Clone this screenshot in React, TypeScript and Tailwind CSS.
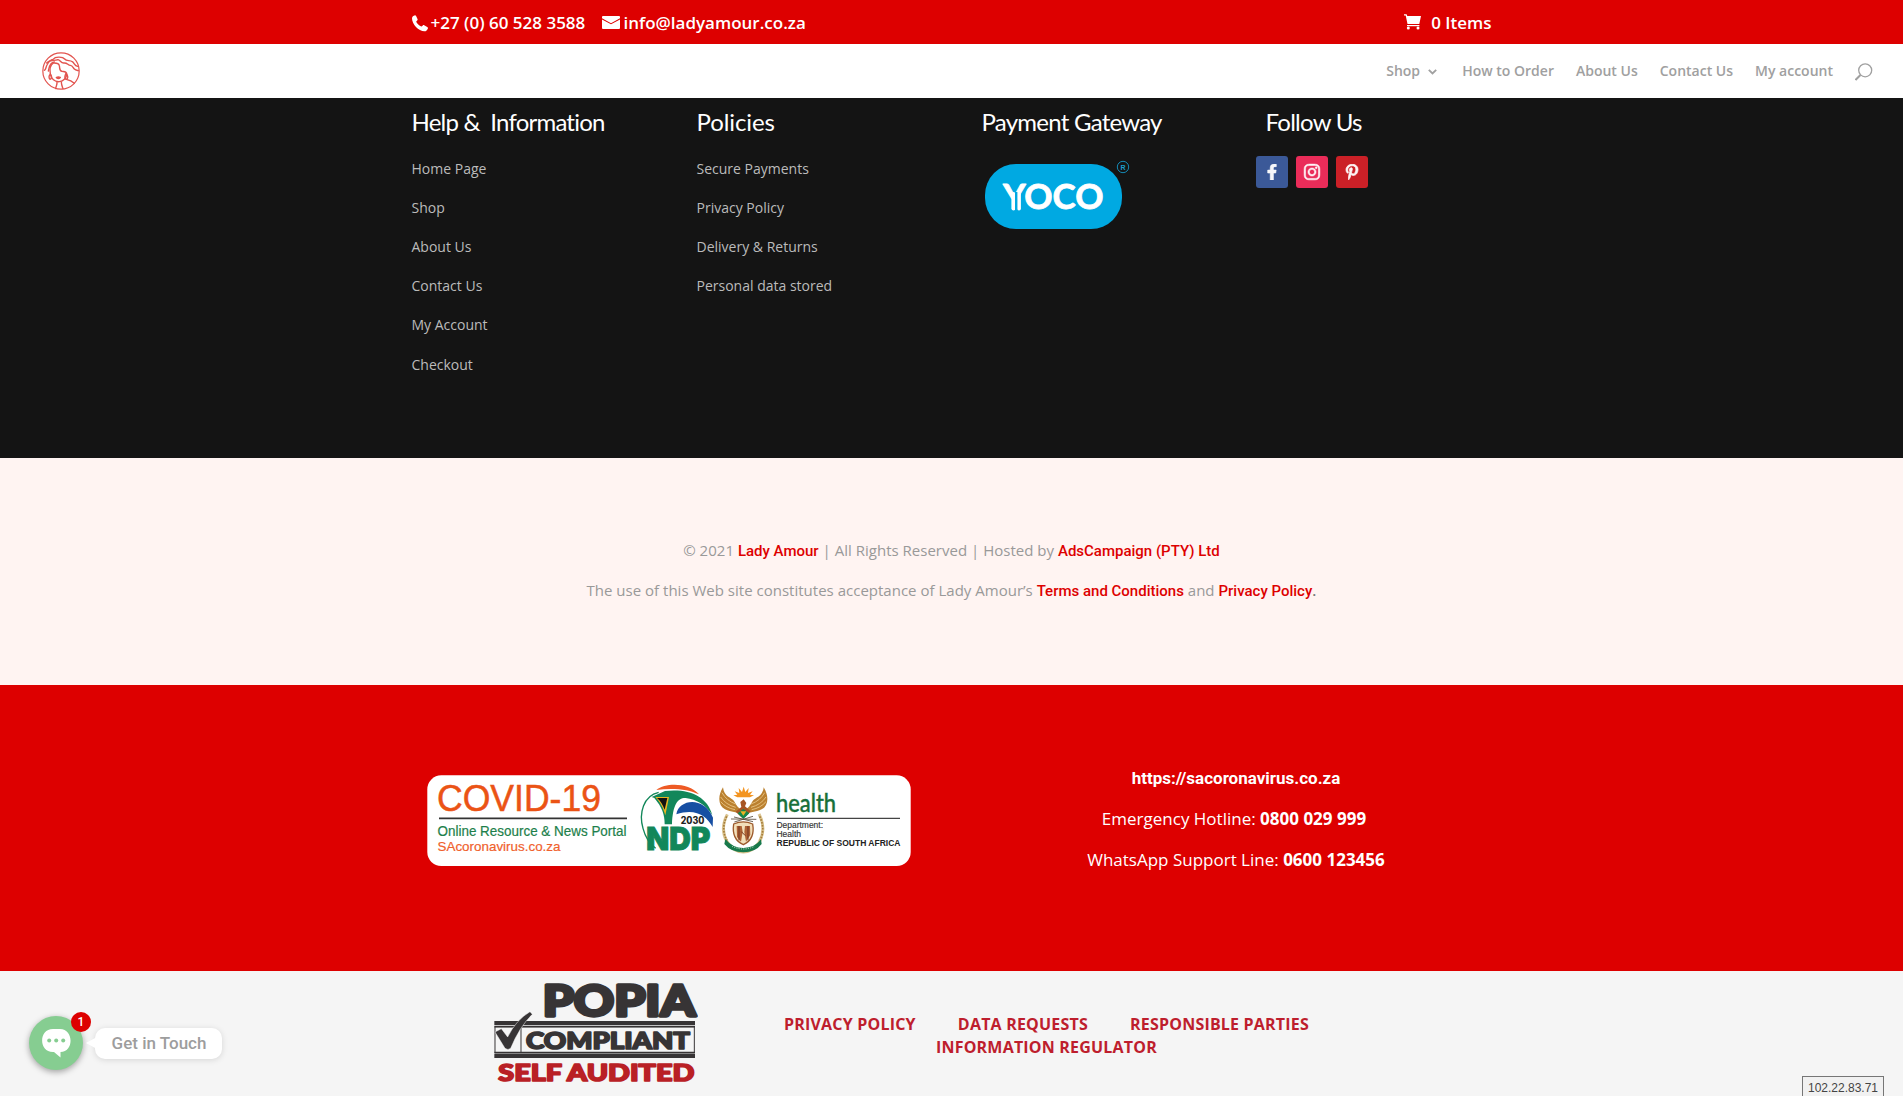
import React from "react";
import { FaFacebookF, FaInstagram, FaPinterestP } from "react-icons/fa";

const openSans = "font-['Open_Sans',sans-serif]";

function BrandLogo() {
  return (
    <svg className="block h-[40px] w-[40px]" viewBox="123 153 120 120" fill="none" stroke="#e2544f" strokeWidth="4.2" strokeLinecap="round" strokeLinejoin="round">
      <circle cx="183" cy="213" r="54.5" strokeWidth="3.6" />
      <path d="M133 211c5-2 4-9 8-16 4-8 8-16 18-17 8-10 30-7 35-1 6 8 16 2 23 8 7 5 6 12 16 14" />
      <path d="M140 189c10-12 22-5 34-10 9 2 8 11 18 10 10-1 12 7 19 7 7 0 8 7 12 11 4 4 7 4 12 5" />
      <path d="M145 213c3-10 2-24 18-27" />
      <path d="M151 222c-3-15 1-27 9-33 8 0 16-1 18 8 2 8-1 15 8 17 9 1 14 0 14 8 0 11-9 22-22 23-14 1-24-9-27-23z" />
      <path d="M169 233c4-3 8-2 12-1-2 4-9 5-12 1z" fill="#d93832" />
      <path d="M151 223c-5 3-5 11-1 15 5-2 6-8 3-13M198 220c-3 6-4 14-1 17 4 2 7-2 6-8-1-5-2-8-5-9z" />
      <path d="M171 246c1 8-3 12-4 20M184 246c0 8 3 14 5 20M199 238c11 2 19 7 24 12" />
    </svg>
  );
}

function PhoneIcon() {
  return (
    <svg className="h-[17px] w-[16px]" viewBox="0 0 16 17" fill="#fff">
      <path d="M0 3.2C0 1.6 1.6.6 2.6.4c.7-.2 1.2.1 1.5.7L5.5 4c.3.7.1 1.1-.3 1.5l-1 1c.5 1.800 3.400 4.600 5.400 5.100l1.200-1.200c.4-.4.9-.5 1.400-.2l3 1.700c.7.4.9.9.7 1.500-.5 1.500-1.800 2.900-3.400 2.900C6.500 16.100 0 9 0 3.200Z" />
    </svg>
  );
}

function MailIcon() {
  return (
    <svg className="mb-[2px] h-[13px] w-[18px]" viewBox="0 0 18 13" fill="#fff">
      <path d="M1 0h16q1 0 1 1v1.300L9 7.200 0 2.300V1q0-1 1-1Z" />
      <path d="M0 3.500l9 4.800 9-4.800V12q0 1-1 1H1q-1 0-1-1Z" />
    </svg>
  );
}

function CartIcon() {
  return (
    <svg className="mb-[3px] h-[16px] w-[17px]" viewBox="0 0 17 16" fill="#fff">
      <path d="M0 .2h2.600l.7 1.700H17l-1.700 8H3.500L1.700 1.400H0Z" />
      <path d="M3 11h12.400v1.200H3z" />
      <circle cx="4.300" cy="14" r="1.500" />
      <circle cx="14" cy="14" r="1.500" />
    </svg>
  );
}

function YocoLogo() {
  return (
    <svg className="mt-[23px] ml-[3px] block h-[70px] w-[146px]" viewBox="985 160 146 70">
      <rect x="985" y="164" width="137" height="65" rx="31" fill="#00a9e2" />
      <text x="1003" y="208.500" textLength="100.5" lengthAdjust="spacingAndGlyphs" fill="#fff" stroke="#fff" strokeWidth=".8" strokeLinejoin="round" fontFamily="Lato" fontWeight="700" fontSize="34">YOCO</text>
      <path d="M1013.500 194v14.500" stroke="#fff" strokeWidth="3.800" strokeLinecap="round" />
      <path d="M1019 194v14.500" stroke="#fff" strokeWidth="3.800" strokeLinecap="round" />
      <path d="M1016.200 192v18.500" stroke="#00a9e2" strokeWidth="2.400" />
      <circle cx="1123" cy="167" r="5.700" fill="none" stroke="#1489b5" strokeWidth="1" />
      <text x="1123" y="169.500" textAnchor="middle" fill="#1c9ccb" fontFamily="Liberation Sans" fontWeight="700" fontSize="7">R</text>
    </svg>
  );
}

function CovidBanner() {
  return (
    <svg className="block h-[91px] w-[484px]" viewBox="427 775 484 91">
      <rect x="427.300" y="775.300" width="483.400" height="90.700" rx="14" fill="#fff" />
      <g fontFamily="Liberation Sans">
        <text x="437" y="811" fontSize="37" textLength="164" lengthAdjust="spacingAndGlyphs" fill="#eb5315" stroke="#eb5315" strokeWidth=".5">COVID-19</text>
        <path d="M439 818.300h188" stroke="#333" strokeWidth="1.800" />
        <text x="437.500" y="836.300" fontSize="14.400" textLength="189" lengthAdjust="spacingAndGlyphs" fill="#1d7f4b" stroke="#1d7f4b" strokeWidth=".2">Online Resource &amp; News Portal</text>
        <text x="437.500" y="851" fontSize="13.600" textLength="123" lengthAdjust="spacingAndGlyphs" fill="#f0612c" stroke="#f0612c" strokeWidth=".2">SAcoronavirus.co.za</text>
        <path d="M777 818.300h123" stroke="#444" strokeWidth="1.300" />
        <text x="776.500" y="828" fontSize="8.600" textLength="46.500" lengthAdjust="spacingAndGlyphs" fill="#333" stroke="#333" strokeWidth=".15">Department:</text>
        <text x="776.500" y="837" fontSize="8.600" textLength="24.500" lengthAdjust="spacingAndGlyphs" fill="#333" stroke="#333" strokeWidth=".15">Health</text>
        <text x="776.500" y="846.300" fontSize="8.600" fontWeight="700" textLength="124" lengthAdjust="spacingAndGlyphs" fill="#222">REPUBLIC OF SOUTH AFRICA</text>
      </g>
      <text x="776" y="812.300" fontFamily="Lato" fontWeight="500" fontSize="24.500" textLength="60" lengthAdjust="spacingAndGlyphs" fill="#17703a" stroke="#17703a" strokeWidth=".4">health</text>
      <g transform="translate(625 765) scale(.33333)">
        {/* NDP 2030 emblem */}
        <path d="M94 75C122 53 190 52 222 88 190 72 140 68 94 75Z" fill="#ee5a24" />
        <path d="M101 82C55 92 41 145 54 190 62 220 78 240 92 250" fill="none" stroke="#12875a" strokeWidth="4" />
        <path d="M80 96 120 78C190 70 246 92 262 150 240 118 215 103 182 99 158 98 143 120 141 178H119C119 147 111 127 88 99Z" fill="#12875a" />
        <path d="M91 96h41l-11 55C114 126 106 113 91 96Z" fill="#e9b323" />
        <path d="M96 99h31l-8 35C113 119 108 109 96 99Z" fill="#111" />
        <path d="M154 148C161 103 236 92 264 158l-1 28C245 152 210 128 154 148Z" fill="#164fa3" />
        <text x="167" y="176" fontFamily="Inter" fontWeight="800" fontSize="29" textLength="71" lengthAdjust="spacingAndGlyphs" fill="#222">2030</text>
        <text x="64" y="254" fontFamily="Inter" fontWeight="900" fontSize="94" textLength="192" lengthAdjust="spacingAndGlyphs" fill="#12875a" stroke="#12875a" strokeWidth="3">NDP</text>
        {/* national coat of arms */}
        <path d="M294 67C277 94 280 122 300 133 318 143 338 139 350 151L354 133C338 132 335 120 327 108 320 97 297 97 294 67ZM416 67C433 94 430 122 410 133 392 143 372 139 360 151L356 133C372 132 375 120 383 108 390 97 413 97 416 67Z" fill="#bb8130" />
        <path d="M291 83q13 24 41 34M287 96q15 23 45 31M287 110q16 19 43 24M419 83q-13 24-41 34M423 96q-15 23-45 31M423 110q-16 19-43 24" fill="none" stroke="#e4bf7d" strokeWidth="3" />
        <path d="m325 91 12-2-8-10 14 5-2-15 10 12 5-16 5 16 10-12-2 15 14-5-8 10 12 2-12 6h-38Z" fill="#f39420" />
        <path d="m356 103 8 11-4 10 17 15-17 18h-11l-17-17 17-14-3-15Z" fill="#a75524" />
        <path d="m338 145 17-13 18 13-18 17Z" fill="#15864c" />
        <path d="M346 139h18l-9 13Z" fill="#edb322" />
        <path d="M318 162 394 163M327 156l57 14M328 171l56-17" stroke="#554735" strokeWidth="2.500" />
        <path d="M307 148q-23 43-1 82 20 31 49 31t48-30q22-40-1-84" fill="none" stroke="#d9c28d" strokeWidth="9" />
        <path d="M305 154q-18 38 1 73M404 154q18 38 1 73" fill="none" stroke="#a67c3a" strokeWidth="5" strokeDasharray="5 4" />
        <path d="M301 222q22 27 54 27 34 0 53-26l2 14q-19 25-55 25-37 0-57-25Z" fill="#18794b" />
        <path d="M326 177q29-13 57 0 8 46-28 62-36-16-29-62Z" fill="#f2dfba" stroke="#9d5a2c" strokeWidth="4" />
        <path d="M335 183h15l3 17-5 30-12-14ZM360 183h15l1 27-13 20-5-29Z" fill="#ae6335" />
        <path d="M342 183v43M369 183v43M349 200l12 12" stroke="#713421" strokeWidth="3" />
        <path d="M321 244q34 16 68 0" fill="none" stroke="#c9dfc4" strokeWidth="3" strokeDasharray="3 4" />
      </g>
    </svg>
  );
}

function PopiaBadge() {
  return (
    <svg className="block h-[117px] w-[206px]" viewBox="492 971 206 117">
      <g transform="translate(480 960) scale(.33333)" fontFamily="Lato" fontWeight="900" strokeLinejoin="round">
        <text x="188" y="168" fontSize="127" textLength="458" lengthAdjust="spacingAndGlyphs" fill="#373435" stroke="#373435" strokeWidth="10">POPIA</text>
        <g fill="none" stroke="#373435">
          <path d="M43 189h602M43 288h602" strokeWidth="12" />
          <path d="M43 200h602M43 278h602" strokeWidth="5" />
          <path d="M45 200h598v78H45ZM123 200v78" strokeWidth="3" />
        </g>
        <path d="M45 216 64 206 83 231Q108 180 150 155L157 163Q119 199 92 265 84 272 75 265Z" fill="#373435" stroke="#f4f4f4" strokeWidth="1.500" />
        <text x="138" y="267" fontSize="67" textLength="492" lengthAdjust="spacingAndGlyphs" fill="#373435" stroke="#373435" strokeWidth="5">COMPLIANT</text>
        <text x="55" y="363" fontSize="67" textLength="588" lengthAdjust="spacingAndGlyphs" fill="#b92025" stroke="#b92025" strokeWidth="5">SELF AUDITED</text>
      </g>
    </svg>
  );
}

function TopBar() {
  return (
    <div className="h-[44px] bg-[#dd0000] text-white">
      <div className="mx-auto flex h-[44px] w-[1080px] items-center pt-[2px] text-[17px] leading-[24px] font-semibold whitespace-nowrap">
        <div className="flex w-[190px] items-center gap-[3px]">
          <PhoneIcon />
          <span>+27 (0) 60 528 3588</span>
        </div>
        <div className="flex items-center gap-[4px]">
          <MailIcon />
          <span>info@ladyamour.co.za</span>
        </div>
        <div className="ml-auto flex items-center gap-[10px]">
          <CartIcon />
          <span>0 Items</span>
        </div>
      </div>
    </div>
  );
}

function Header() {
  return (
    <header className="flex h-[54px] items-center bg-white pl-[41px] pr-[30px]">
      <BrandLogo />
      <nav className="mb-px ml-auto flex items-center gap-[22px] text-[14px] font-semibold whitespace-nowrap text-[#a0a0a0]">
        <a className="flex w-[54px] items-center justify-between">
          Shop
          <svg className="mt-[3px] mr-[3px] h-[6px] w-[9px]" viewBox="0 0 9 6" fill="none" stroke="#a0a0a0" strokeWidth="1.800">
            <path d="m.8.8 3.700 3.700L8.200.8" />
          </svg>
        </a>
        <a>How to Order</a>
        <a>About Us</a>
        <a>Contact Us</a>
        <a>My account</a>
        <svg className="mt-[3px] h-[18px] w-[18px]" viewBox="0 0 18 18" fill="none" stroke="#a0a0a0">
          <circle cx="10.200" cy="7.300" r="6.500" strokeWidth="1.300" />
          <path d="m5.500 12-5 5" strokeWidth="2" />
        </svg>
      </nav>
    </header>
  );
}

function FooterHeading({ children, className = "tracking-[-0.75px]" }: { children: React.ReactNode; className?: string }) {
  return <h4 className={`h-[30px] font-['Lato',sans-serif] text-[24px] leading-[30px] font-normal whitespace-pre text-white ${className}`}>{children}</h4>;
}

function LinkList({ items }: { items: string[] }) {
  return (
    <ul className="mt-[11.700px] text-[14px] text-[#bbbbbb]">
      {items.map((item) => (
        <li key={item} className="h-[39.200px] leading-[39.200px]">{item}</li>
      ))}
    </ul>
  );
}

function FooterColumns() {
  return (
    <section className="h-[360px] bg-[#141414] pt-[9px]">
      <div className="mx-auto grid w-[1080px] grid-cols-[285px_285px_284px_226px]">
        <div>
          <FooterHeading className="tracking-[-0.8px]">{"Help &  Information"}</FooterHeading>
          <LinkList items={["Home Page", "Shop", "About Us", "Contact Us", "My Account", "Checkout"]} />
        </div>
        <div>
          <FooterHeading className="tracking-[-0.1px]">Policies</FooterHeading>
          <LinkList items={["Secure Payments", "Privacy Policy", "Delivery & Returns", "Personal data stored"]} />
        </div>
        <div>
          <FooterHeading>Payment Gateway</FooterHeading>
          <YocoLogo />
        </div>
        <div>
          <FooterHeading>Follow Us</FooterHeading>
          <div className="mt-[19px] -ml-[10px] flex gap-[8px] text-white/95">
            <span className="flex h-8 w-8 items-center justify-center rounded-[3px] bg-[#3b5998]"><FaFacebookF size={16} stroke="currentColor" strokeWidth={20} /></span>
            <span className="flex h-8 w-8 items-center justify-center rounded-[3px] bg-[#ea2c59]"><FaInstagram size={18} stroke="currentColor" strokeWidth={16} /></span>
            <span className="flex h-8 w-8 items-center justify-center rounded-[3px] bg-[#cb2027]"><FaPinterestP size={16} stroke="currentColor" strokeWidth={24} /></span>
          </div>
        </div>
      </div>
    </section>
  );
}

function Strong({ children }: { children: React.ReactNode }) {
  return <a className="font-['Roboto',sans-serif] font-medium tracking-normal text-[#dd0000]">{children}</a>;
}

function Copyright() {
  return (
    <section className="flex h-[227px] flex-col items-center gap-[13px] bg-[#fff4f2] pt-[79px] text-[15px] leading-[26px] tracking-[0.01px] whitespace-nowrap text-[#999999]">
      <p>© 2021 <Strong>Lady Amour</Strong> | All Rights Reserved | Hosted by <Strong>AdsCampaign (PTY) Ltd</Strong></p>
      <p>The use of this Web site constitutes acceptance of Lady Amour’s <Strong>Terms and Conditions</Strong> and <Strong>Privacy Policy</Strong><span className="font-['Roboto',sans-serif] font-medium text-[#777]">.</span></p>
    </section>
  );
}

function Covid() {
  return (
    <section className="h-[286px] bg-[#dd0000] pt-[78px]">
      <div className="mx-auto flex w-[1080px] justify-between">
        <div className="mt-[12px] ml-[15px]"><CovidBanner /></div>
        <div className="flex w-[511px] flex-col items-center gap-[11px] text-[17px] leading-[30px] whitespace-nowrap text-white">
          <a className="font-['Roboto',sans-serif] font-bold">https://sacoronavirus.co.za</a>
          <p className="pr-[4px]">Emergency Hotline: <b>0800 029 999</b></p>
          <p>WhatsApp Support Line: <b>0600 123456</b></p>
        </div>
      </div>
    </section>
  );
}

function Popia() {
  return (
    <section className="flex h-[125px] overflow-hidden bg-[#f5f5f5] pl-[492px]">
      <PopiaBadge />
      <div className="mt-[42px] ml-[86px] w-[525px] text-[16px] leading-[23px] font-bold tracking-[0.2px] whitespace-nowrap text-[#be1e2d]">
        <div className="flex justify-between">
          <a>PRIVACY POLICY</a>
          <a>DATA REQUESTS</a>
          <a>RESPONSIBLE PARTIES</a>
        </div>
        <div className="text-center"><a>INFORMATION REGULATOR</a></div>
      </div>
    </section>
  );
}

function ChatWidget() {
  return (
    <div className="absolute top-[1016px] left-[29px] flex h-[54px] items-end font-['Roboto',sans-serif]">
      <div className="relative flex h-[54px] w-[54px] items-center justify-center rounded-full bg-[#86cd91] shadow-[0_2px_6px_rgba(0,0,0,0.35)]">
        <svg className="mt-px h-[29px] w-[29px]" viewBox="0 0 29 29">
          <path d="M11 0h7c14 0 14 23 .5 23L18.500 28.500 12 23h-1C-3.500 23-3.500 0 11 0Z" fill="#fff" />
          <g fill="#86cd91"><circle cx="7.200" cy="11.500" r="2" /><circle cx="14.200" cy="11.500" r="2" /><circle cx="21.200" cy="11.500" r="2" /></g>
        </svg>
        <span className="absolute -top-[4px] left-[42px] flex h-5 w-5 items-center justify-center rounded-full bg-[#dd0000] text-[12px] font-medium text-white">1</span>
      </div>
      <div className="relative mb-[11px] ml-[12px] flex h-[31px] w-[127px] items-center justify-center rounded-[10px] bg-white pl-px text-[17px] font-medium text-[#9d9d9d] shadow-[0_1px_6px_rgba(0,0,0,0.13)]">
        <svg className="absolute top-[9px] -left-[9px] h-[12px] w-[11px]" viewBox="0 0 11 12"><path d="M0 6 11 0v12Z" fill="#fff" /></svg>
        Get in Touch
      </div>
    </div>
  );
}

export default function App() {
  return (
    <div className={`relative h-[1096px] w-full overflow-hidden bg-white ${openSans}`}>
      <TopBar />
      <Header />
      <FooterColumns />
      <Copyright />
      <Covid />
      <Popia />
      <ChatWidget />
      <div className="absolute top-[1076px] left-[1802px] h-[24px] w-[82px] border border-[#767676] bg-[#f1f1f1] text-center font-['Liberation_Sans',sans-serif] text-[12px] leading-[22px] text-[#444]">102.22.83.71</div>
    </div>
  );
}
